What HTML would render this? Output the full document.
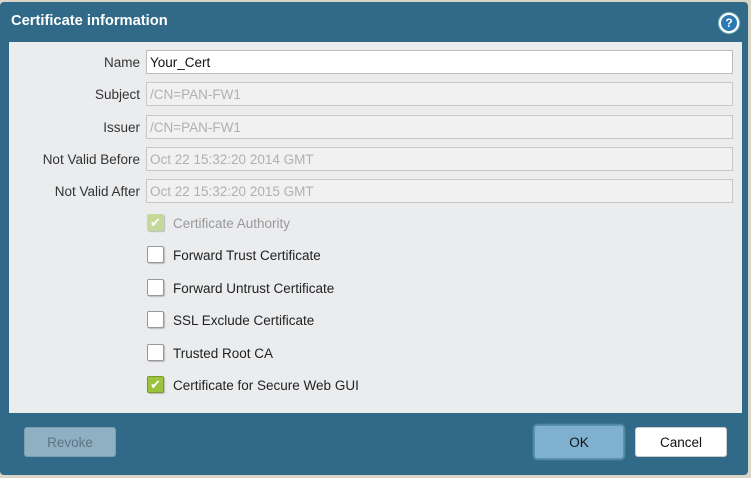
<!DOCTYPE html>
<html><head><style>
body{margin:0;width:751px;height:478px;background:#d9d6c8;position:relative;overflow:hidden;font-family:"Liberation Sans",sans-serif;font-size:13.5px;}
.dlg{position:absolute;left:0;top:2px;width:748px;height:473px;background:#316a88;border-radius:4px;}
.title{position:absolute;left:11px;top:11px;color:#fff;font-weight:bold;font-size:14.7px;}
.help{position:absolute;left:719px;top:11px;width:16px;height:16px;border-radius:50%;background:#2a79b4;border:2px solid #fff;color:#fff;font-weight:bold;font-size:12px;text-align:center;line-height:16px;box-shadow:0 0 0 1px #8bb;}
.panel{position:absolute;left:9px;top:40px;width:733px;height:371px;background:#ebecee;}
.lbl{position:absolute;right:602px;color:#333;}
.in{position:absolute;left:137px;width:582px;height:22px;border:1px solid #c8c8c8;background:#f1f1f1;color:#b0b0b0;line-height:24px;padding-left:3px;box-sizing:content-box;}
.cb{position:absolute;left:138px;width:15px;height:15px;border:1px solid #999;border-radius:2px;background:#fff;box-shadow:1px 1px 1px #bbb;}
.cbl{position:absolute;left:164px;color:#222;}
.btn{position:absolute;height:28px;border-radius:3px;text-align:center;line-height:29px;font-size:13.5px;}
</style></head><body>
<div class="dlg">
<div class="title">Certificate information</div>
<div class="help">?</div>
<div class="panel">
<div class="lbl" style="top:13px">Name</div>
<div class="in" style="top:8px;background:#fff;color:#111;border-color:#bbb">Your_Cert</div>
<div class="lbl" style="top:45px">Subject</div>
<div class="in" style="top:40px">/CN=PAN-FW1</div>
<div class="lbl" style="top:78px">Issuer</div>
<div class="in" style="top:73px">/CN=PAN-FW1</div>
<div class="lbl" style="top:110px">Not Valid Before</div>
<div class="in" style="top:105px">Oct 22 15:32:20 2014 GMT</div>
<div class="lbl" style="top:142px">Not Valid After</div>
<div class="in" style="top:137px">Oct 22 15:32:20 2015 GMT</div>

<div class="cb" style="top:172px;background:#c5d99a;border-color:#c5d99a;color:#fff;font-size:13px;line-height:15px;text-align:center">✔</div>
<div class="cbl" style="top:174px;color:#999">Certificate Authority</div>
<div class="cb" style="top:204px"></div><div class="cbl" style="top:206px">Forward Trust Certificate</div>
<div class="cb" style="top:237px"></div><div class="cbl" style="top:239px">Forward Untrust Certificate</div>
<div class="cb" style="top:269px"></div><div class="cbl" style="top:271px">SSL Exclude Certificate</div>
<div class="cb" style="top:302px"></div><div class="cbl" style="top:304px">Trusted Root CA</div>
<div class="cb" style="top:334px;background:#9cc33c;border-color:#7a9a30;color:#fff;font-size:13px;line-height:15px;text-align:center">✔</div>
<div class="cbl" style="top:336px">Certificate for Secure Web GUI</div>
</div>
<div class="btn" style="left:24px;top:425px;width:90px;background:#8fb0c2;color:#5d7483;border:1px solid #7c9db0">Revoke</div>
<div class="btn" style="left:534px;top:423px;width:88px;height:32px;line-height:33px;background:#7fb0cf;color:#111;border:1px solid #5a90b0;box-shadow:0 0 2px #9cd">OK</div>
<div class="btn" style="left:635px;top:425px;width:90px;background:#fff;color:#111;border:1px solid #ccc">Cancel</div>
</div>
</body></html>
